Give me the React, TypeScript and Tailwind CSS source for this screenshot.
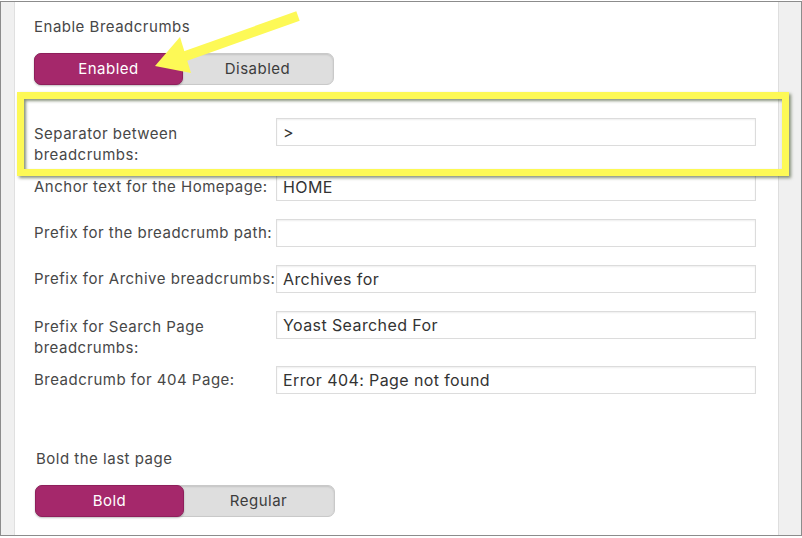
import type { ReactNode } from 'react';

const font = { fontFamily: 'Inter, "Liberation Sans", Arial, sans-serif' };

type Row = { label: ReactNode; value: string; tall?: boolean };

const rows: Row[] = [
  { label: <>Separator between<br />breadcrumbs:</>, value: '>', tall: true },
  { label: 'Anchor text for the Homepage:', value: 'HOME' },
  { label: 'Prefix for the breadcrumb path:', value: '' },
  { label: 'Prefix for Archive breadcrumbs:', value: 'Archives for' },
  { label: <>Prefix for Search Page<br />breadcrumbs:</>, value: 'Yoast Searched For', tall: true },
  { label: 'Breadcrumb for 404 Page:', value: 'Error 404: Page not found' },
];

function Toggle({ on, off }: { on: string; off: string }) {
  return (
    <div className="flex h-[32px] w-[300px] rounded-[7px] border border-[#c9c9c9] bg-[#dedede] shadow-[inset_0_1px_2px_rgba(0,0,0,0.12)]">
      <div className="-m-px flex w-[149px] items-center justify-center rounded-[7px] border border-[#8e1f5b] bg-[#a5286b] text-[15px] tracking-[0.5px] text-white shadow-[0_1px_2px_rgba(0,0,0,0.25)]">
        {on}
      </div>
      <div className="flex flex-1 items-center justify-center text-[15px] tracking-[0.5px] text-[#3c3c3c]">{off}</div>
    </div>
  );
}

export default function App() {
  return (
    <div className="relative h-[538px] w-[802px] overflow-hidden bg-white" style={font}>
      <div className="mt-px flex h-[535px] border border-[#8c8c8c]">
        <div className="w-[14px] border-r border-[#e0e0e0] bg-[#f0f0f0]" />

        <div className="flex-1 bg-white pl-[19px] pr-[19px] pt-[14px]">
          <div className="text-[15px] leading-[21px] tracking-[0.5px] text-[#474747]">Enable Breadcrumbs</div>
          <div className="mt-[16px]">
            <Toggle on="Enabled" off="Disabled" />
          </div>

          <div className="mt-[33px]">
            {rows.map((r, i) => (
              <div key={i} className={`flex items-start ${r.tall ? 'h-[55px]' : 'h-[46px]'}`}>
                <div
                  className={`w-[242px] shrink-0 whitespace-nowrap text-[15px] leading-[21px] tracking-[0.5px] text-[#474747] ${r.tall ? 'pt-[5px]' : 'pt-[3px]'}`}
                >
                  {r.label}
                </div>
                <div className="flex h-[28px] w-[480px] items-center border border-[#dcdcdc] bg-white px-[6px] text-[16px] tracking-[0.4px] text-[#333] shadow-[inset_0_1px_2px_rgba(0,0,0,0.07)]">
                  {r.value}
                </div>
              </div>
            ))}
          </div>

          <div className="pl-[2px] pt-[36px]">
            <div className="text-[15px] leading-[21px] tracking-[0.5px] text-[#474747]">Bold the last page</div>
            <div className="mt-[16px] -ml-px">
              <Toggle on="Bold" off="Regular" />
            </div>
          </div>
        </div>

        <div className="w-[23px] border-l border-[#dedede] bg-[#f0f0f0]" />
      </div>

      {/* highlight box */}
      <div className="pointer-events-none absolute left-[17px] top-[92px] h-[84px] w-[772px] border-[7px] border-[#fdf956] shadow-[2px_2px_3px_rgba(40,60,20,0.55),inset_2px_2px_3px_rgba(40,60,20,0.55)]" />

      {/* arrow */}
      <svg className="pointer-events-none absolute left-0 top-0" width="802" height="538" viewBox="0 0 802 538">
        <line x1="298" y1="16" x2="180" y2="58" stroke="#fdf956" strokeWidth="10" />
        <polygon points="155,66 180,37 191,73" fill="#fdf956" />
      </svg>
    </div>
  );
}
